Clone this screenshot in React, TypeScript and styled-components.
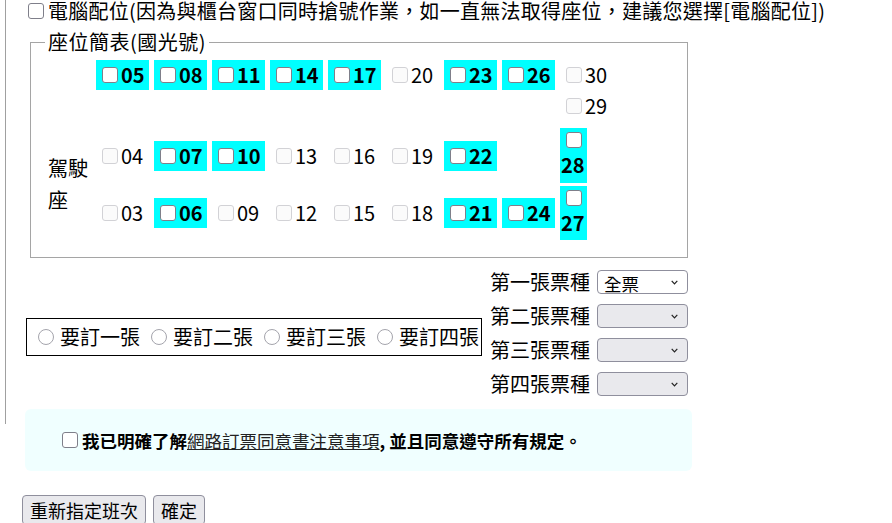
import React from "react";
import styled, { createGlobalStyle } from "styled-components";

const GlobalStyle = createGlobalStyle`
  html, body {
    margin: 0;
    padding: 0;
    background: #fff;
  }
  body {
    font-family: "Noto Sans CJK TC", "Noto Sans", sans-serif;
    font-size: 20px;
    color: #000;
  }
`;

const Page = styled.div`
  position: relative;
  padding-left: 22px;

  &::before {
    content: "";
    position: absolute;
    left: 5px;
    top: 0;
    width: 1px;
    height: 425px;
    background: #a0a0a0;
  }
`;

const Check = styled.input.attrs({ type: "checkbox" })<{ $off?: boolean }>`
  appearance: none;
  flex: none;
  width: 16px;
  height: 16px;
  margin: 0;
  box-sizing: border-box;
  border: 1px solid ${({ $off }) => ($off ? "#d2d2d6" : "#7f7f8a")};
  border-radius: 3px;
  background: ${({ $off }) => ($off ? "#fbfbfb" : "#fff")};
`;

const Radio = styled.input.attrs({ type: "radio" })`
  appearance: none;
  flex: none;
  width: 16px;
  height: 16px;
  margin: 0 6px 0 11px;
  box-sizing: border-box;
  border: 1px solid #a4a4ac;
  border-radius: 50%;
  background: #fff;
`;

const TopLine = styled.label`
  display: flex;
  align-items: center;
  margin-top: -1px;
  line-height: 24px;
  letter-spacing: 0.25px;
  white-space: nowrap;

  & > input {
    margin: 0 4px 0 6px;
  }
`;

const SeatMap = styled.fieldset`
  width: 658px;
  box-sizing: border-box;
  margin: 7px 0 0 8px;
  padding: 6px 14px 17px;
  border: 1px solid #a5a5a5;
`;

const Legend = styled.legend`
  padding: 0 3px;
  line-height: 24px;
  letter-spacing: 0.5px;
`;

const SeatGrid = styled.div`
  display: grid;
  grid-template-columns: 43px repeat(8, 53px) 27px;
  grid-template-rows: 30px 32px 55px 54px;
  column-gap: 5px;
  row-gap: 3px;
  margin-left: 3px;
`;

const Driver = styled.div`
  grid-row: 3 / span 2;
  grid-column: 1;
  align-self: center;
  line-height: 32px;
`;

const Seat = styled.label<{ $open: boolean; $row: number; $col: number; $h: number }>`
  grid-row: ${({ $row }) => $row};
  grid-column: ${({ $col }) => $col};
  justify-self: start;
  align-self: ${({ $row }) => ($row === 2 ? "start" : "center")};
  min-width: 100%;
  box-sizing: border-box;
  height: ${({ $h }) => $h}px;
  display: flex;
  align-items: center;
  padding: 0 1px;
  white-space: nowrap;
  line-height: 24px;
  background: ${({ $open }) => ($open ? "#00ffff" : "transparent")};
  font-weight: ${({ $open }) => ($open ? 700 : 400)};

  & > input {
    margin: 0 3px 0 5px;
  }
`;

const TallSeat = styled.label<{ $row: number }>`
  grid-row: ${({ $row }) => $row};
  grid-column: 10;
  display: flex;
  flex-direction: column;
  align-items: flex-start;
  padding: 4px 1px 0;
  background: #00ffff;
  font-weight: 700;

  & > input {
    margin: 0 0 0 5px;
  }
  & > span {
    margin-top: 5px;
    line-height: 24px;
  }
`;

const TicketRow = styled.div`
  display: flex;
  align-items: center;
  margin: 12px 0 0 4px;
`;

const QtyBox = styled.div`
  display: flex;
  align-items: center;
  height: 36px;
  margin-top: 7px;
  padding-right: 2px;
  border: 1px solid #000;
`;

const QtyOption = styled.label`
  display: flex;
  align-items: center;
  line-height: 24px;
  white-space: nowrap;
`;

const TypeList = styled.div`
  display: flex;
  flex-direction: column;
  gap: 10px;
  margin-left: 8px;
`;

const TypeRow = styled.div`
  display: flex;
  align-items: center;
  gap: 7px;
  line-height: 24px;
`;

const SelectWrap = styled.div<{ $filled: boolean }>`
  position: relative;
  width: 91px;
  height: 24px;
  box-sizing: border-box;
  border: 1px solid #8f8f9d;
  border-radius: 4px;
  background: ${({ $filled }) => ($filled ? "#fff" : "#e9e9ed")};

  & > svg {
    position: absolute;
    right: 9px;
    top: 9px;
    pointer-events: none;
  }
`;

const Select = styled.select`
  appearance: none;
  width: 100%;
  height: 100%;
  margin: 0;
  border: 0;
  padding: 0 0 0 6px;
  background: transparent;
  font-family: inherit;
  font-size: 17.5px;
  line-height: 22px;
  color: #000;
`;

const AgreeBox = styled.div`
  width: 667px;
  height: 62px;
  box-sizing: border-box;
  margin: 13px 0 0 3px;
  padding-left: 37px;
  display: flex;
  align-items: center;
  border-radius: 6px;
  background: #f0ffff;
  font-size: 17.5px;
  font-weight: 700;
  white-space: nowrap;

  & > input {
    margin-right: 4px;
  }
`;

const AgreeLink = styled.a`
  color: #222;
  font-weight: 400;
  text-decoration: underline;
`;

const Buttons = styled.div`
  display: flex;
  gap: 7px;
  margin-top: 24px;
`;

const Button = styled.button`
  height: 30px;
  padding: 0 7px;
  border: 1px solid #8f8f9d;
  border-radius: 4px;
  background: #e9e9ed;
  font-family: inherit;
  font-size: 18px;
  color: #000;
`;

type Cell = { no: string; open: boolean; row: number; col: number };

const open = new Set(["05", "08", "11", "14", "17", "23", "26", "07", "10", "22", "06", "21", "24"]);

const layout: (string | null)[][] = [
  ["05", "08", "11", "14", "17", "20", "23", "26", "30"],
  [null, null, null, null, null, null, null, null, "29"],
  ["04", "07", "10", "13", "16", "19", "22", null, null],
  ["03", "06", "09", "12", "15", "18", "21", "24", null],
];

const cells: Cell[] = layout.flatMap((row, r) =>
  row
    .map((no, c) => (no ? { no, open: open.has(no), row: r + 1, col: c + 2 } : null))
    .filter((x): x is Cell => x !== null)
);

const Chevron = () => (
  <svg width="7" height="5" viewBox="0 0 7 5">
    <polyline points="0.7,0.8 3.5,3.8 6.3,0.8" fill="none" stroke="#222" strokeWidth="1.2" />
  </svg>
);

const types = ["第一張票種", "第二張票種", "第三張票種", "第四張票種"];

const App: React.FC = () => (
  <Page>
    <GlobalStyle />
    <TopLine>
      <Check />
      電腦配位(因為與櫃台窗口同時搶號作業，如一直無法取得座位，建議您選擇[電腦配位])
    </TopLine>

    <SeatMap>
      <Legend>座位簡表(國光號)</Legend>
      <SeatGrid>
        <Driver>駕駛座</Driver>
        {cells.map((s) => (
          <Seat key={s.no} $open={s.open} $row={s.row} $col={s.col} $h={s.row === 2 ? 26 : 30}>
            <Check $off={!s.open} disabled={!s.open} />
            {s.no}
          </Seat>
        ))}
        <TallSeat $row={3}>
          <Check />
          <span>28</span>
        </TallSeat>
        <TallSeat $row={4}>
          <Check />
          <span>27</span>
        </TallSeat>
      </SeatGrid>
    </SeatMap>

    <TicketRow>
      <QtyBox>
        {["要訂一張", "要訂二張", "要訂三張", "要訂四張"].map((t) => (
          <QtyOption key={t}>
            <Radio name="qty" />
            {t}
          </QtyOption>
        ))}
      </QtyBox>
      <TypeList>
        {types.map((t, i) => (
          <TypeRow key={t}>
            {t}
            <SelectWrap $filled={i === 0}>
              <Select defaultValue={i === 0 ? "full" : ""}>
                {i === 0 ? <option value="full">全票</option> : <option value=""></option>}
              </Select>
              <Chevron />
            </SelectWrap>
          </TypeRow>
        ))}
      </TypeList>
    </TicketRow>

    <AgreeBox>
      <Check />
      我已明確了解<AgreeLink href="#">網路訂票同意書注意事項</AgreeLink>, 並且同意遵守所有規定。
    </AgreeBox>

    <Buttons>
      <Button>重新指定班次</Button>
      <Button>確定</Button>
    </Buttons>
  </Page>
);

export default App;
